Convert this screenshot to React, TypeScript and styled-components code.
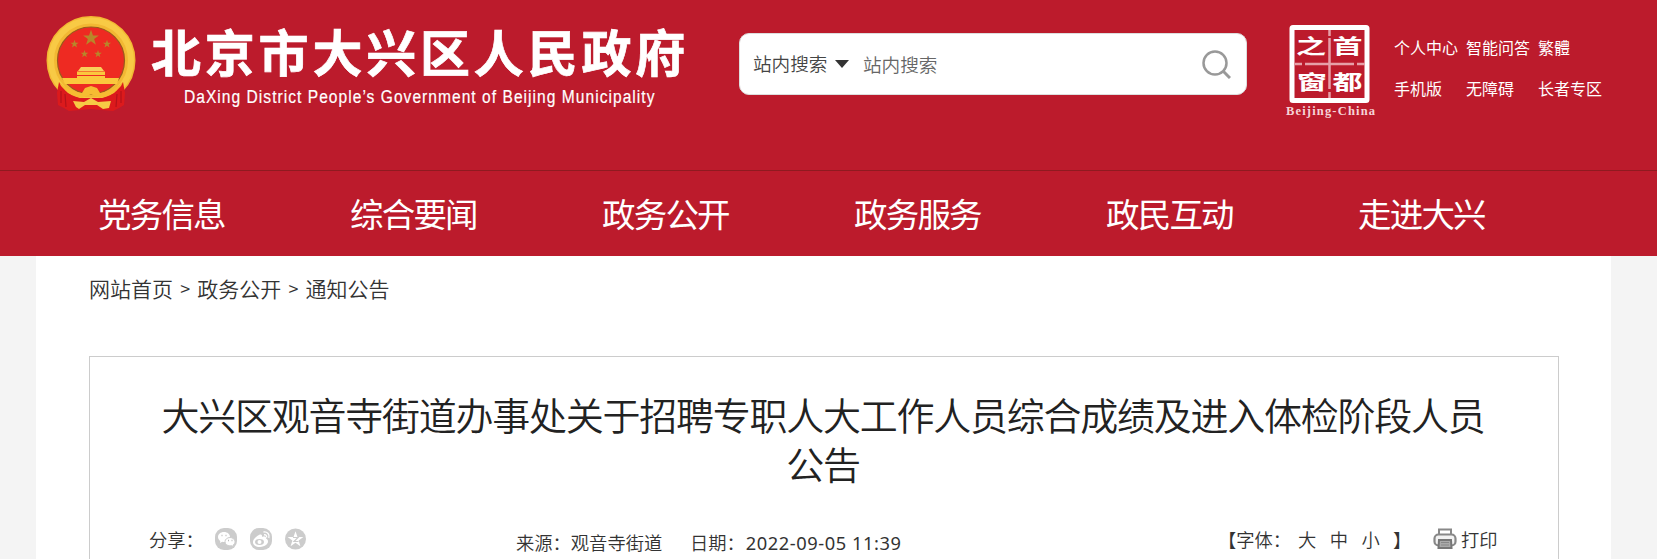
import React from 'react';
import styled, { createGlobalStyle } from 'styled-components';

const GlobalStyle = createGlobalStyle`
  * {
    box-sizing: border-box;
    margin: 0;
    padding: 0;
  }

  body {
    height: 559px;
    overflow: hidden;
    background-color: #f4f4f4;
    color: #333;
    font-family: 'Noto Sans CJK SC', sans-serif;
    font-weight: 350;
  }

  a {
    color: inherit;
    text-decoration: none;
  }
`;

const Page = styled.div`
  height: 559px;
  overflow: hidden;
`;

const Header = styled.header`
  height: 256px;
  background-color: #bc1b2c;
  color: #fff;
`;

const HeaderTop = styled.div`
  display: flex;
  align-items: flex-start;
  height: 171px;
  padding-left: 46px;
  border-bottom: 1px solid #8f1a20;
`;

const Emblem = styled.svg`
  width: 90px;
  height: 97px;
  margin-top: 15px;
`;

const SiteName = styled.div`
  width: 603px;
  padding: 19px 0 0 15px;
`;

const NameCn = styled.h1`
  font-size: 50px;
  font-weight: 700;
  line-height: 62px;
  letter-spacing: 3.8px;
  white-space: nowrap;
  -webkit-text-stroke: 0.7px #fff;
`;

const NameEn = styled.p`
  width: 560px;
  margin: 5px 0 0 33px;
  font-family: 'Liberation Sans', sans-serif;
  font-size: 18px;
  line-height: 22px;
  letter-spacing: 1.2px;
  white-space: nowrap;
  transform: scaleX(0.864);
  transform-origin: left;
  -webkit-text-stroke: 0.2px #fff;
`;

const SearchBox = styled.form`
  display: flex;
  align-items: center;
  width: 508px;
  height: 62px;
  margin-top: 33px;
  padding: 0 15px 0 13px;
  border: 1px solid #ddd;
  border-radius: 10px;
  background-color: #fff;
  color: #444;
  font-size: 18.6px;
`;

const SearchType = styled.span`
  display: flex;
  align-items: center;
  gap: 8px;
  width: 110px;
  padding-bottom: 4px;
`;

const Caret = styled.i`
  margin-top: 3px;
  border: 7px solid transparent;
  border-top: 8px solid #333;
  border-bottom: 0;
`;

const SearchInput = styled.input`
  flex: 1;
  min-width: 0;
  padding-bottom: 2px;
  border: none;
  outline: none;
  font: inherit;

  &::placeholder {
    color: #666;
  }
`;

const Seal = styled.svg`
  width: 92px;
  height: 96px;
  margin: 24px 0 0 38px;
`;

const TopLinks = styled.nav`
  display: grid;
  grid-template-columns: 72px 72px 72px;
  grid-auto-rows: 41px;
  margin: 27px 0 0 17px;
  font-size: 16px;
  font-weight: 400;
  line-height: 41px;
  white-space: nowrap;
`;

const MainNav = styled.nav`
  display: flex;
  padding-left: 98px;

  a {
    width: 252px;
    font-size: 33.5px;
    font-weight: 400;
    line-height: 84px;
    letter-spacing: -1.8px;
  }
`;

const Content = styled.main`
  width: 1575px;
  height: 303px;
  margin-left: 36px;
  padding: 0 52px 0 53px;
  background-color: #fff;
`;

const Breadcrumb = styled.div`
  display: flex;
  height: 100px;
  font-size: 21px;
  line-height: 65px;

  span {
    width: 24.3px;
    font-size: 18px;
    text-align: center;
  }
`;

const Article = styled.article`
  height: 260px;
  padding: 32px 59px 0 57px;
  border: 1px solid #ccc;
`;

const Title = styled.h2`
  color: #222;
  font-size: 38px;
  font-weight: 350;
  line-height: 49px;
  letter-spacing: -1.25px;
  text-align: center;
`;

const Meta = styled.div`
  display: flex;
  height: 40px;
  margin-top: 32px;
  padding-left: 1px;
  font-size: 18.3px;
  line-height: 40px;
  white-space: nowrap;
`;

const Share = styled.div`
  display: flex;
  width: 368px;
  padding-left: 1px;

  > span {
    width: 66px;
  }

  svg {
    width: 22px;
    height: 22px;
    margin: 9px 13px 0 0;
  }
`;

const Source = styled.div`
  display: flex;
  width: 702px;
  padding-top: 3px;

  span {
    width: 174px;
  }

  time {
    padding-left: 1px;
    font-family: 'Noto Sans', sans-serif;
    font-weight: 400;
    letter-spacing: 0.55px;
  }
`;

const FontSize = styled.div`
  display: flex;
  width: 215px;

  span {
    width: 80px;
  }

  a {
    width: 31.7px;
  }
`;

const Print = styled.a`
  display: flex;

  svg {
    width: 24px;
    height: 22px;
    margin: 9px 4px 0 0;
  }
`;

const topLinks = ['个人中心', '智能问答', '繁體', '手机版', '无障碍', '长者专区'];
const navItems = ['党务信息', '综合要闻', '政务公开', '政务服务', '政民互动', '走进大兴'];

const STAR = 'M0-10 2.4-3.1 9.5-3.1 3.8 1.2 5.9 8.1 0 4-5.9 8.1-3.8 1.2-9.5-3.1-2.4-3.1Z';

const EmblemIcon = () => (
  <Emblem viewBox="0 0 90 97">
    <circle cx="45" cy="44" r="38" fill="#ee2a22" />
    <circle cx="45" cy="45.500" r="39" fill="none" stroke="#f2b833" strokeWidth="11" />
    <circle cx="45" cy="45.500" r="40" fill="none" stroke="#f8ca45" strokeWidth="6" />
    <circle cx="45" cy="45.500" r="33.500" fill="none" stroke="#9a5a1c" strokeWidth="1.200" />
    <g fill="#b8862a">
      <path d={STAR} transform="translate(45 23) scale(.83)" />
      <path d={STAR} transform="translate(28.500 29) scale(.43)" />
      <path d={STAR} transform="translate(61 29) scale(.43)" />
      <path d={STAR} transform="translate(38.500 39) scale(.4)" />
      <path d={STAR} transform="translate(52 39) scale(.4)" />
    </g>
    <path d="M35 52H55L58 56H32Z" fill="#f9d05a" />
    <path d="M31 56.500H59V60H31ZM31 61H59V63H73L71 69H19L16 63H31Z" fill="#fbc83d" />
    {/* ribbon */}
    <path d="M13 67 11 78 12 90 18 93 23 96 45 94 67 96 73 93 78 90 79 78 77 67 68 78 56 83H34L22 78Z" fill="#dc1a1c" />
    <path d="M13 67Q22 76 36 78L39 73 45 71 51 73 54 78Q68 76 77 67L75 71Q66 82 54 83L45 79 36 83Q24 82 15 71Z" fill="#f6bc32" />
    <path d="M19 79 20 92M71 79 70 92M15 76V88M75 76V88" stroke="#b5121a" strokeWidth="1.200" />
    <path d="M27 86 38 87 45 83 52 87 65 86 63 93 57 94 51 90H39L33 94 30 92Z" fill="#f7ca45" />
  </Emblem>
);

const SealIcon = () => (
  <Seal viewBox="0 0 92 96">
    <rect x="7" y="3.500" width="75" height="73" rx="1" fill="none" stroke="#fff" strokeWidth="5" />
    <path d="M44.500 6V12M44.500 14V65M44.500 68V74M10 40H17M20 40H69M72 40H80" stroke="#e6a0a8" strokeWidth="2.500" />
    <g fill="#fff" fontSize="30" fontWeight="700" fontFamily="'Noto Sans CJK SC', sans-serif">
      <text x="11" y="31" transform="matrix(1 0 0 .68 0 8.500)">
        之
      </text>
      <text x="47.500" y="31" transform="matrix(1 0 0 .68 0 8.500)">
        首
      </text>
      <text x="12" y="31" transform="matrix(1 0 0 .68 0 44.500)">
        窗
      </text>
      <text x="47.500" y="31" transform="matrix(1 0 0 .68 0 44.500)">
        都
      </text>
    </g>
    <text x="1" y="91" fill="#f6d4d8" fontSize="12.500" fontWeight="700" fontFamily="'Liberation Serif', serif" textLength="89">
      Beijing-China
    </text>
  </Seal>
);

const WechatIcon = () => (
  <svg viewBox="0 0 22 22">
    <rect width="22" height="22" rx="9" fill="#ccc" />
    <path d="M9 4C5.500 4 3 6.200 3 9c0 1.700 1 3 2.300 3.900L5 15l2.200-1.200c.7.2 1.300.2 1.800.2 3.500 0 6-2.200 6-5S12.500 4 9 4Z" fill="#fff" />
    <path d="M15 9.500c-2.800 0-5 1.900-5 4.200s2.200 4.200 5 4.200l1.500-.2 2 1-.4-1.700c1.200-.8 1.900-2 1.900-3.300 0-2.300-2.200-4.200-5-4.200Z" fill="#fff" stroke="#ccc" />
    <path d="M6.500 7.500h1M10.500 7.500h1M13 12.500h1M16.500 12.500h1" stroke="#bbb" strokeWidth="1.500" />
  </svg>
);

const WeiboIcon = () => (
  <svg viewBox="0 0 22 22">
    <rect width="22" height="22" rx="9" fill="#ccc" />
    <path d="M9 7C11 6 12.500 7 12 9c3-1 4.500 0 4 1.500 4 2 2 8-6 8.500C3 19 1 14 5 10c1.500-1.500 2.500-2.500 4-3Z" fill="#fff" />
    <ellipse cx="9.500" cy="14" rx="4.500" ry="3" fill="#ccc" />
    <circle cx="9.500" cy="14" r="2" fill="#fff" />
    <path d="M13.500 4c4-.5 6.500 2.500 5.300 6M14 6.800c2-.3 3 1 2.500 2.700" fill="none" stroke="#fff" strokeWidth="1.300" />
  </svg>
);

const QzoneIcon = () => (
  <svg viewBox="0 0 22 22">
    <circle cx="10.500" cy="11" r="10.500" fill="#ccc" />
    <path d={STAR} transform="translate(10.500 11.500) scale(.83)" fill="#fff" />
    <path d="M8 9.500h5l-4 4h4.500" fill="none" stroke="#ccc" strokeWidth="1.200" />
  </svg>
);

const PrinterIcon = () => (
  <svg viewBox="0 0 24 22">
    <path d="M6 7V1.500H18V7" fill="#fff" stroke="#888" strokeWidth="2" />
    <rect x="1.500" y="6.500" width="21" height="11" rx="4" fill="#f2f2f2" stroke="#888" strokeWidth="2.200" />
    <path d="M6 12H18L18.500 20H5.500Z" fill="#aaa" stroke="#777" strokeWidth="2" />
    <path d="M8 14.500H16M8 17H16" stroke="#888" />
  </svg>
);

const App = () => {
  return (
    <Page>
      <GlobalStyle />
      <Header>
        <HeaderTop>
          <EmblemIcon />
          <SiteName>
            <NameCn>北京市大兴区人民政府</NameCn>
            <NameEn>DaXing District People’s Government of Beijing Municipality</NameEn>
          </SiteName>
          <SearchBox>
            <SearchType>
              站内搜索
              <Caret />
            </SearchType>
            <SearchInput placeholder="站内搜索" />
            <svg width="29" height="29" viewBox="0 0 29 29" fill="none" stroke="#999" strokeWidth="2.500">
              <circle cx="13" cy="13" r="11.500" />
              <path d="M21 21 28 28" strokeWidth="3" />
            </svg>
          </SearchBox>
          <SealIcon />
          <TopLinks>
            {topLinks.map((link) => (
              <a key={link} href="#">
                {link}
              </a>
            ))}
          </TopLinks>
        </HeaderTop>
        <MainNav>
          {navItems.map((item) => (
            <a key={item} href="#">
              {item}
            </a>
          ))}
        </MainNav>
      </Header>
      <Content>
        <Breadcrumb>
          <a href="#">网站首页</a>
          <span>&gt;</span>
          <a href="#">政务公开</a>
          <span>&gt;</span>
          <a href="#">通知公告</a>
        </Breadcrumb>
        <Article>
          <Title>大兴区观音寺街道办事处关于招聘专职人大工作人员综合成绩及进入体检阶段人员公告</Title>
          <Meta>
            <Share>
              <span>分享：</span>
              <WechatIcon />
              <WeiboIcon />
              <QzoneIcon />
            </Share>
            <Source>
              <span>来源：观音寺街道</span>
              <p>
                日期：<time>2022-09-05 11:39</time>
              </p>
            </Source>
            <FontSize>
              <span>【字体：</span>
              <a href="#">大</a>
              <a href="#">中</a>
              <a href="#">小</a>】
            </FontSize>
            <Print href="#">
              <PrinterIcon />
              打印
            </Print>
          </Meta>
        </Article>
      </Content>
    </Page>
  );
};

export default App;
